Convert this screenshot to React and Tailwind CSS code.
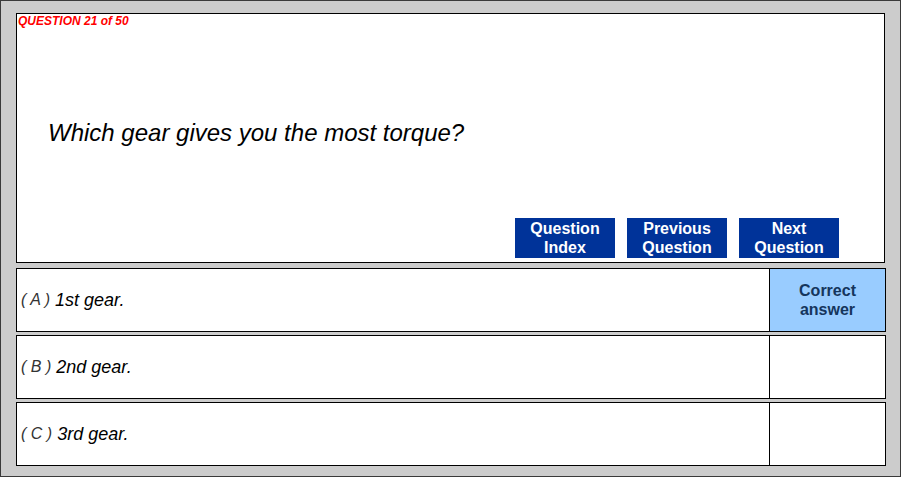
import React from "react";

const answers = [
  { letter: "A", text: "1st gear.", correct: true },
  { letter: "B", text: "2nd gear.", correct: false },
  { letter: "C", text: "3rd gear.", correct: false },
];

const NavButton = ({ top, bottom }) => (
  <button className="w-[100px] h-[40px] bg-[#003399] text-white font-bold text-[16px] leading-[19px] flex flex-col items-center justify-center">
    <span>{top}</span>
    <span>{bottom}</span>
  </button>
);

export default function App() {
  return (
    <div className="w-[902px] h-[478px] bg-white font-['Liberation_Sans',Arial,sans-serif] text-black">
      <div className="w-[901px] h-[477px] bg-[#cccccc] border border-[#3a3a3a] pl-[15px] pt-[12px] flex flex-col">
        {/* Question panel */}
        <div className="w-[869px] h-[250px] border border-black bg-white flex flex-col">
          <div className="pl-[1px] pt-[1px] text-[12px] leading-[13px] font-bold italic text-[#ff0000]">
            QUESTION 21 of 50
          </div>
          <div className="mt-[91px] pl-[31px] text-[24px] leading-[28px] italic">
            Which gear gives you the most torque?
          </div>
          <div className="mt-auto flex justify-end gap-[12px] pr-[45px] pb-[4px]">
            <NavButton top="Question" bottom="Index" />
            <NavButton top="Previous" bottom="Question" />
            <NavButton top="Next" bottom="Question" />
          </div>
        </div>

        {/* Answer rows */}
        <div className="mt-[5px] flex flex-col gap-[3px]">
          {answers.map((a) => (
            <div
              key={a.letter}
              className="w-[870px] h-[64px] border border-black bg-white flex"
            >
              <div className="flex-1 flex items-center pl-[4px] italic">
                <span className="text-[16px] text-[#333]">( {a.letter} )</span>
                <span className="ml-[5px] text-[18px]">{a.text}</span>
              </div>
              <div
                className={
                  a.correct
                    ? "w-[116px] border-l border-black bg-[#99ccff] flex flex-col items-center justify-center text-[16px] leading-[19px] font-bold text-[#15355c]"
                    : "w-[116px] border-l border-black bg-white"
                }
              >
                {a.correct && (
                  <>
                    <span>Correct</span>
                    <span>answer</span>
                  </>
                )}
              </div>
            </div>
          ))}
        </div>
      </div>
    </div>
  );
}
